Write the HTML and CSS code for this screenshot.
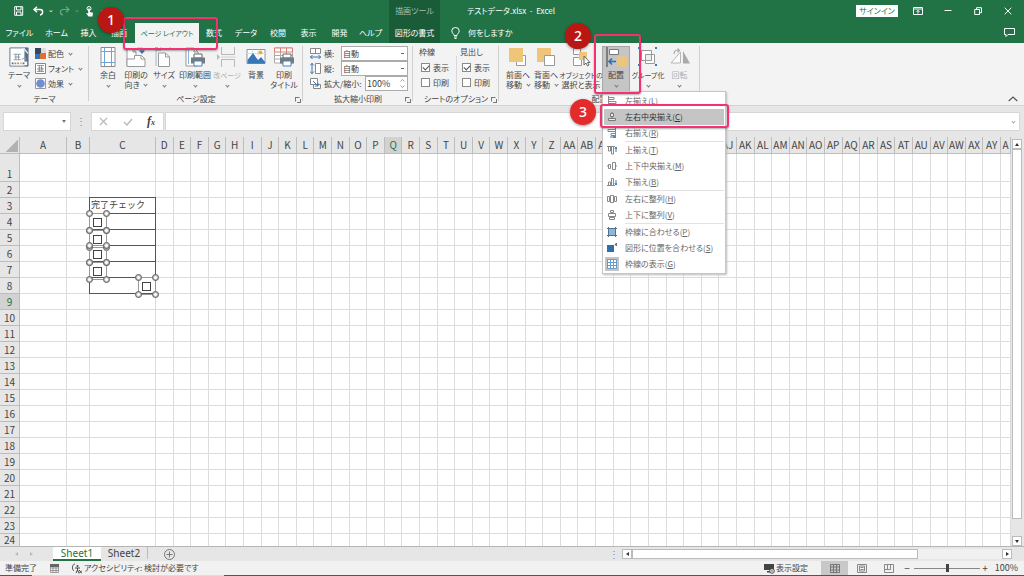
FILE: index.html
```html
<!DOCTYPE html>
<html lang="ja">
<head>
<meta charset="utf-8">
<title>テストデータ.xlsx - Excel</title>
<link rel="stylesheet" href="styles.css">
</head>
<body>
<div class="app">
<header class="top">
  <div class="quick">
    <button class="qbtn" aria-label="上書き保存"><svg width="10" height="10" viewBox="0 0 10 10"><path d="M.7.7h8v8.600h-8zM2.500.9v3h4.500v-3M2.500 9V6h4.500v3" fill="none" stroke="#fff"/></svg></button>
    <button class="qbtn" aria-label="元に戻す"><svg width="11" height="10" viewBox="0 0 11 10"><path d="M4 .8 1 3.500 4 6.200M1.200 3.500H7c3.500 0 3.500 5 0 5.500" fill="none" stroke="#fff" stroke-width="1.500"/></svg></button>
    <span class="qchev">⌄</span>
    <button class="qbtn dim" aria-label="やり直し"><svg width="11" height="10" viewBox="0 0 11 10"><path d="M7 .8l3 2.700-3 2.700M9.800 3.500H4c-3.500 0-3.500 5 0 5.500" fill="none" stroke="#fff" stroke-width="1.200"/></svg></button>
    <span class="qchev dim">⌄</span>
    <button class="qbtn" aria-label="タッチ/マウス モード"><svg width="10" height="11" viewBox="0 0 10 11"><circle cx="4" cy="2.500" r="2" fill="none" stroke="#fff"/><path d="M3.200 2.500h1.600V6l3.200.8-.5 3.700H3.500L1 7l2.200.5z" fill="#fff"/></svg></button>
    <span class="qchev">⌄</span>
  </div>
  <div class="context-title">描画ツール</div>
  <div class="caption">
    <span class="doc">テストデータ.xlsx&nbsp; -&nbsp; Excel</span>
    <button class="signin">サインイン</button>
    <button class="win" aria-label="リボンの表示オプション"><svg width="10" height="8" viewBox="0 0 10 8"><path d="M.5.500h9v7h-9zM.5 2h9M5 6.500v-3M3.500 4.800 5 3.300l1.500 1.500" fill="none" stroke="#fff"/></svg></button>
    <button class="win" aria-label="最小化"><svg width="8" height="8" viewBox="0 0 8 8"><path d="M.5 3.500h7" stroke="#fff"/></svg></button>
    <button class="win" aria-label="元に戻す (縮小)"><svg width="8" height="8" viewBox="0 0 8 8"><path d="M.7 2.500h4.800v5H.7zM2.500 2.300V.7h5v5H6" fill="none" stroke="#fff"/></svg></button>
    <button class="win" aria-label="閉じる"><svg width="8" height="8" viewBox="0 0 8 8"><path d="M.7.7l6.600 6.600M7.300.7.7 7.300" stroke="#fff"/></svg></button>
  </div>
  <nav class="tabs">
    <button>ファイル</button><button>ホーム</button><button>挿入</button><button>描画</button>
    <div class="anchor"><button class="active dense">ページ レイアウト</button><span class="frame frame-tab"></span><span class="badge badge-1">1</span></div>
    <button>数式</button><button>データ</button><button>校閲</button><button>表示</button><button>開発</button><button>ヘルプ</button>
  </nav>
  <button class="context-tab">図形の書式</button>
  <div class="tell">
    <svg width="9" height="12" viewBox="0 0 9 12"><path d="M3 8.500C3 7 .8 6 .8 3.900a3.700 3.400 0 0 1 7.400 0C8.200 6 6 7 6 8.500zM3 10h3M3.500 11.500h2" fill="none" stroke="#fff"/></svg>
    <span class="tell-text">何をしますか</span>
    <button class="win" aria-label="コメント"><svg width="11" height="9" viewBox="0 0 11 9"><path d="M.5.500h10v6H4l-2 2v-2H.5z" fill="none" stroke="#fff"/></svg></button>
  </div>
</header>

<section class="ribbon">
  <div class="group g-theme">
    <div class="items">
      <button class="big"><svg width="22" height="22" viewBox="0 0 22 22"><path d="M1 1h20v20H1z" fill="#fff" stroke="#5c6f86"/><path d="M17 1h4v20h-4z" fill="#5c6f86"/><path d="M14 1h3l4 5v2z" fill="#dbe3ec"/><path d="M5 8h8M6 11h6M5 14h8M7.500 8v6M10.500 8v6M14 14l4-3v4" fill="none" stroke="#8895a5"/><path d="M2 16h18v4H2z" fill="#fff"/><path d="M3 17h2v2H3z" fill="#3a73b5"/><path d="M6 17h2v2H6z" fill="#e07b37"/><path d="M9 17h2v2H9z" fill="#999"/><path d="M12 17h2v2h-2z" fill="#f0b52c"/><path d="M15 17h2v2h-2z" fill="#3a73b5"/></svg><span>テーマ</span><i class="chev"></i></button>
      <div class="stack">
        <button><svg width="11" height="11" viewBox="0 0 11 11"><path d="M0 0h6v6H0z" fill="#35475a"/><path d="M6 0h5v5H6z" fill="#ddd"/><path d="M0 6h5v5H0z" fill="#3a73b5"/><path d="M5 5h6v6H5z" fill="#e07032"/></svg>配色<i class="chev"></i></button>
        <button><svg width="11" height="11" viewBox="0 0 11 11"><path d="M.5.500h10v10H.5z" fill="#fff" stroke="#888"/><path d="M2 2.500h7M3 5h5v2H3zM2 8.500h7M4.500 2.500v6M6.500 2.500v6" fill="none" stroke="#777" stroke-width=".7"/></svg>フォント<i class="chev"></i></button>
        <button><svg width="11" height="11" viewBox="0 0 11 11"><path d="M.5.500h10v10H.5z" fill="#fff" stroke="#999"/><circle cx="5.500" cy="5.500" r="4.300" fill="#6f8fcf"/></svg>効果<i class="chev"></i></button>
      </div>
    </div>
    <div class="name">テーマ</div>
  </div>

  <div class="group g-page">
    <div class="items">
      <button class="big w28"><svg width="16" height="20" viewBox="0 0 16 20"><path d="M1 .5h14v19H1z" fill="#fff" stroke="#8a8a8a"/><path d="M4.500 1v18M11.500 1v18M1.500 4.500h13M1.500 15.500h13" stroke="#6fa3d8"/></svg><span>余白</span><i class="chev"></i></button>
      <button class="big w28"><svg width="20" height="20" viewBox="0 0 20 20"><path d="M1 19V2h6l3 3v5" fill="#fff" stroke="#999"/><path d="M7 2v3h3" fill="none" stroke="#999"/><path d="M8.500 8.500h7l3.500 3.500v7.500H1V12h7.500z" fill="#fff" stroke="#999"/><path d="M15 8.500V12h4" fill="none" stroke="#999"/><path d="M11 1.500h5V5M13.800 3.500 16 6l2.300-2.500" fill="none" stroke="#3876b5" stroke-width="1.400"/></svg><span>印刷の<br>向き <i class="chev in"></i></span></button>
      <button class="big w28"><svg width="18" height="20" viewBox="0 0 18 20"><path d="M1 3v16M0 .5h3M6 1.500h9M6 0v3M15 0v3" fill="none" stroke="#9cb7d2"/><path d="M3.500 6V19.500h11V10l-4-4zM10.500 6v4h4M1 3h5" fill="#fff" stroke="#999"/></svg><span>サイズ</span><i class="chev"></i></button>
      <button class="big w34"><svg width="20" height="20" viewBox="0 0 20 20"><path d="M1 1h8l4 4v14H1z" fill="#fff" stroke="#999"/><path d="M3.500 3v14" stroke="#8db7df"/><path d="M9 1v4h4" fill="none" stroke="#999"/><path d="M9 7h8v4H9z" fill="#fff" stroke="#666"/><path d="M6 10.500h14v6H6z" fill="#737b84"/><path d="M9 14h8v5H9z" fill="#fff" stroke="#4b83bd"/></svg><span>印刷範囲</span><i class="chev"></i></button>
      <button class="big w30 off"><svg width="20" height="20" viewBox="0 0 20 20"><path d="M4.500 0v7.500h13V0M4.500 20v-7.500h13V20" fill="none" stroke="#aaa"/><path d="M0 7v6l3-3z" fill="#aaa"/><path d="M4 10h15" stroke="#ccc"/></svg><span class="dense">改ページ</span><i class="chev"></i></button>
      <button class="big w28"><svg width="20" height="20" viewBox="0 0 20 20"><path d="M1 2.500h18v14H1z" fill="#fff" stroke="#8296ab"/><path d="M1 6.500h18M6.500 2.500v8M12 2.500v8" stroke="#d5dde5"/><circle cx="14.500" cy="5.500" r="2" fill="#f0a941"/><path d="M1.500 13 7 6l5 7 3-3 4 5v1.500H1.500z" fill="#3876b5"/></svg><span>背景</span></button>
      <button class="big w28"><svg width="20" height="20" viewBox="0 0 20 20"><path d="M.5 1h18v15H.5zM.5 8.500h18M.5 12h18M6.500 1v15M12.500 1v15" fill="#fff" stroke="#aaa"/><path d="M.5 1h18v4H.5zM6.500 1v4M12.500 1v4" fill="#fff" stroke="#d98072"/><path d="M9 7h8v4H9z" fill="#fff" stroke="#666"/><path d="M6 10.500h14v6H6z" fill="#737b84"/><path d="M9 14h8v5H9z" fill="#fff" stroke="#4b83bd"/></svg><span>印刷<br>タイトル</span></button>
    </div>
    <div class="name">ページ設定</div><i class="launch"></i>
  </div>

  <div class="group g-scale">
    <div class="fields">
      <svg width="11" height="11" viewBox="0 0 11 11"><path d="M.5.500h10v5H.5zM5.500.500v5" fill="#fff" stroke="#888"/><path d="M0 9h11M2.500 7 .5 9l2 2M8.500 7l2 2-2 2" fill="none" stroke="#3876b5"/></svg><label for="fw">横:</label><select id="fw"><option>自動</option></select>
      <svg width="11" height="11" viewBox="0 0 11 11"><path d="M5.500.500h5v10h-5z" fill="#fff" stroke="#888"/><path d="M2 0v11M0 2.500l2-2 2 2M0 8.500l2 2 2-2" fill="none" stroke="#3876b5"/></svg><label for="fh">縦:</label><select id="fh"><option>自動</option></select>
      <svg width="11" height="11" viewBox="0 0 11 11"><path d="M.5.500h7v6h-7z" fill="#fff" stroke="#888"/><path d="M3.500 6.500h7v4h-7z" fill="#fff" stroke="#888"/><path d="M3 3l5 5M8 5v3H5" fill="none" stroke="#3876b5"/></svg><label class="zoom" for="fz"><span>拡大/縮小:</span><span class="spin"><input id="fz" type="text" value="100%"><svg width="5" height="9" viewBox="0 0 5 9"><path d="M.5 2.500l2-2 2 2M.5 6.500l2 2 2-2" fill="none" stroke="#888" stroke-width=".8"/></svg></span></label>
    </div>
    <div class="name">拡大縮小印刷</div><i class="launch"></i>
  </div>

  <div class="group g-opts">
    <div class="options">
      <fieldset><legend>枠線</legend><label><input type="checkbox" checked>表示</label><label><input type="checkbox">印刷</label></fieldset>
      <fieldset><legend>見出し</legend><label><input type="checkbox" checked>表示</label><label><input type="checkbox">印刷</label></fieldset>
    </div>
    <div class="name">シートのオプション</div><i class="launch"></i>
  </div>

  <div class="group g-arrange">
    <div class="items">
      <button class="big w28"><svg width="20" height="20" viewBox="0 0 20 20"><path d="M8.500 8.500h9v10h-9z" fill="#fff" stroke="#999"/><path d="M1 1h14v14H1z" fill="#efc57a"/></svg><span>前面へ<br>移動 <i class="chev in"></i></span></button>
      <button class="big w28"><svg width="20" height="20" viewBox="0 0 20 20"><path d="M1 1h14v14H1z" fill="#efc57a"/><path d="M8.500 8.500h10v10h-10z" fill="#fff" stroke="#999"/></svg><span>背面へ<br>移動 <i class="chev in"></i></span></button>
      <button class="big w42"><svg width="20" height="20" viewBox="0 0 20 20"><path d="M2.500 1.500h7v6h-7zM2.500 10.500h8v8h-8z" fill="#fff" stroke="#999"/><path d="M8 5h8v8H8z" fill="#efc57a"/><path d="M13 9v9l2-2 1.500 3 1.500-1-1.500-2.500H19z" fill="#fff" stroke="#666"/></svg><span><span class="dense">オブジェクトの</span><br>選択と表示</span></button>
      <div class="anchor arrange">
        <button class="big w28 pressed"><svg width="22" height="20" viewBox="0 0 22 20"><path d="M2 0v20" stroke="#666" stroke-width="1.500"/><path d="M4.500 2.500h9v5h-9z" fill="#fff" stroke="#777"/><path d="M12 9.500h10v10H12z" fill="#efc57a"/><path d="M4 14.500h7M7 11.500l-3 3 3 3" fill="none" stroke="#2770b8" stroke-width="1.600"/></svg><span>配置</span><i class="chev"></i></button>
        <div class="menu" role="menu">
          <button><svg viewBox="0 0 10 10"><path d="M1.500 0v10M2 1.500h5v2H2M2 5.500h7v2H2" fill="none" stroke="#888"/><path d="M2 9h5M4 7.500 2 9l2 1" fill="none" stroke="#3876b5"/></svg><span>左揃え(<u>L</u>)</span></button>
          <button class="hot"><svg viewBox="0 0 10 10"><path d="M5 0v1M3.500 1.500h3v3h-3zM5 4.500v2M1.500 6.500h7v2h-7z" fill="#eee" stroke="#777"/></svg><span>左右中央揃え(<u>C</u>)</span></button>
          <button><svg viewBox="0 0 10 10"><path d="M8.500 0v10M8 1.500H1v2h7M8 5.500H4v2h4" fill="none" stroke="#888"/><path d="M3 9h5M6 7.500 8 9l-2 1" fill="none" stroke="#3876b5"/></svg><span>右揃え(<u>R</u>)</span></button>
          <hr>
          <button><svg viewBox="0 0 10 10"><path d="M0 1.500h8M1.500 2v4h2V2M4.500 2v7h2V2" fill="none" stroke="#888"/><path d="M9 7V2M8 4l1-2 1 2" fill="none" stroke="#3876b5"/></svg><span>上揃え(<u>T</u>)</span></button>
          <button><svg viewBox="0 0 10 10"><path d="M0 5h1M1.500 3.500h2v4h-2zM5.500 1.500h3v7h-3zM9 5h1" fill="#fff" stroke="#888"/></svg><span>上下中央揃え(<u>M</u>)</span></button>
          <button><svg viewBox="0 0 10 10"><path d="M0 8.500h8M1.500 8V5h2v3M4.500 8V1.500h2V8" fill="none" stroke="#888"/><path d="M9 3v5M8 6l1 2 1-2" fill="none" stroke="#3876b5"/></svg><span>下揃え(<u>B</u>)</span></button>
          <hr>
          <button><svg viewBox="0 0 10 10"><path d="M.5 2.500h2v5h-2zM3.500 1.500h3v7h-3zM7.500 2.500h2v5h-2z" fill="#fff" stroke="#888"/></svg><span>左右に整列(<u>H</u>)</span></button>
          <button><svg viewBox="0 0 10 10"><path d="M3.500.500h3v2h-3zM1.500 3.500h7v3h-7zM2.500 7.500h5v2h-5z" fill="#fff" stroke="#888"/></svg><span>上下に整列(<u>V</u>)</span></button>
          <hr>
          <button><svg viewBox="0 0 10 10"><path d="M2 2h6v6H2z" fill="#8db7df"/><path d="M1.500 0v10M8.500 0v10M0 1.500h10M0 8.500h10" stroke="#54708c"/></svg><span>枠線に合わせる(<u>P</u>)</span></button>
          <button><svg viewBox="0 0 10 10"><path d="M0 2h7v7H0z" fill="#2f6fab"/><path d="M9.500 0v3L8 1.500z" fill="#444" stroke="#444" stroke-width=".5"/></svg><span>図形に位置を合わせる(<u>S</u>)</span></button>
          <button class="checked"><svg viewBox="0 0 10 10"><path d="M0 0h10v10H0z" fill="#fff"/><path d="M.5 0v10M3.500 0v10M6.500 0v10M9.500 0v10M0 .5h10M0 3.500h10M0 6.500h10M0 9.500h10" stroke="#6b9bc9"/></svg><span>枠線の表示(<u>G</u>)</span></button>
          <span class="frame frame-menu"></span><span class="badge badge-3">3</span>
        </div>
        <span class="frame frame-arrange"></span><span class="badge badge-2">2</span>
      </div>
      <button class="big w36"><svg width="20" height="20" viewBox="0 0 20 20"><path d="M3.500 3.500h10v10h-10zM7.500 7.500h9v9h-9z" fill="#fff" stroke="#999"/><path d="M7.500 7.500h6v6h-6z" fill="#eee" stroke="#999"/><path d="M0 0h2v2H0zM17 0h2v2h-2zM0 17h2v2H0zM17 17h2v2h-2z" fill="#3876b5"/></svg><span class="dense">グループ化</span><i class="chev"></i></button>
      <button class="big w27 off"><svg width="20" height="20" viewBox="0 0 20 20"><path d="M10.500 5v11H1z" fill="#fff" stroke="#aaa"/><path d="M13 4v12.500h7z" fill="#999"/><path d="M4 7c0-4 3-4 5-3.500M7.500 1.500l2 2-2 2" fill="none" stroke="#999" stroke-width="1.200"/></svg><span>回転</span><i class="chev"></i></button>
    </div>
    <div class="name">配置</div>
  </div>
  <button class="collapse" aria-label="リボンを折りたたむ"><svg width="10" height="6" viewBox="0 0 10 6"><path d="M.7 5 5 1l4.300 4" fill="none" stroke="#555" stroke-width="1.200"/></svg></button>
</section>

<section class="formula">
  <div class="namebox"><input type="text" aria-label="名前ボックス"><i class="tri"></i></div>
  <span class="dots">⋮</span>
  <div class="fx"><svg width="9" height="9" viewBox="0 0 9 9"><path d="M1 1l7 7M8 1 1 8" stroke="#bbb" stroke-width="1.300"/></svg><svg width="10" height="9" viewBox="0 0 10 9"><path d="M1 5l3 3 5-6" fill="none" stroke="#bbb" stroke-width="1.500"/></svg><span>f<small>x</small></span></div>
  <div class="entry"><input type="text" aria-label="数式バー"><i class="chev"></i></div>
</section>

<main class="work">
  <div class="sheet">
    <table class="grid" id="grid"></table>
    <div class="shape s1"><input type="checkbox" aria-label="チェック 4"><b></b><b></b><b></b><b></b></div>
    <div class="shape s2"><input type="checkbox" aria-label="チェック 5"><b></b><b></b><b></b><b></b></div>
    <div class="shape s3"><input type="checkbox" aria-label="チェック 6"><b></b><b></b><b></b><b></b></div>
    <div class="shape s4"><input type="checkbox" aria-label="チェック 7"><b></b><b></b><b></b><b></b></div>
    <div class="shape s5"><input type="checkbox" aria-label="チェック 8"><b></b><b></b><b></b><b></b></div>
  </div>
  <div class="vscroll"><button class="arrow up" aria-label="上へ"></button><div class="vthumb"></div><button class="arrow down" aria-label="下へ"></button></div>
</main>

<footer class="sheets">
  <div class="tabnav"><i class="arr l"></i><i class="arr r"></i></div>
  <button class="sheettab on">Sheet1</button><button class="sheettab">Sheet2</button>
  <button class="add" aria-label="新しいシート"><svg width="11" height="11" viewBox="0 0 11 11"><circle cx="5.500" cy="5.500" r="5" fill="none" stroke="#777"/><path d="M5.500 2.500v6M2.500 5.500h6" stroke="#777"/></svg></button>
  <span class="dots">⋮</span>
  <div class="hscroll"><button class="arrow left" aria-label="左へ"></button><div class="hthumb"></div><button class="arrow right" aria-label="右へ"></button></div>
</footer>
<div class="status">
  <span class="ready">準備完了</span>
  <svg class="macro" width="9" height="9" viewBox="0 0 9 9"><path d="M.5 1.500h8v7h-8zM.5 4h8M.5 6.500h8M3 3v5M6 3v5" fill="none" stroke="#888" stroke-width=".8"/><path d="M0 0h9v3H0z" fill="#666"/></svg>
  <svg width="11" height="11" viewBox="0 0 11 11"><path d="M4 .8C1 1.500.5 6 3 8" fill="none" stroke="#555"/><circle cx="6.500" cy="3" r="1" fill="#444"/><path d="M4 5h5M6.500 5v2L5 10M6.500 7l1.500 3M8 7l3 3.500M11 7.500l-3 3" fill="none" stroke="#444"/></svg>
  <span class="acc">アクセシビリティ: 検討が必要です</span>
  <button class="display"><svg width="11" height="11" viewBox="0 0 11 11"><path d="M0 1h10v6H0zM3 8h3v1.500H3z" fill="#444"/><circle cx="8" cy="8" r="2.300" fill="#fff" stroke="#444"/><circle cx="8" cy="8" r=".8" fill="#444"/></svg>表示設定</button>
  <button class="view on" aria-label="標準"><svg width="10" height="9" viewBox="0 0 10 9"><path d="M.5.500h9v8h-9zM.5 3h9M.5 6h9M3.500.500v8M6.500.500v8" fill="none" stroke="#777"/></svg></button>
  <button class="view" aria-label="ページ レイアウト"><svg width="10" height="9" viewBox="0 0 10 9"><path d="M.5.500h9v8h-9zM2.500 2h5v5h-5zM3.500 3.500h3M3.500 5.500h3" fill="none" stroke="#888"/></svg></button>
  <button class="view" aria-label="改ページ プレビュー"><svg width="10" height="9" viewBox="0 0 10 9"><path d="M.5.500h9v8h-9zM3.500.500v5M6.500.500v5M.5 5.500h6" fill="none" stroke="#888"/></svg></button>
  <span class="sign">−</span><input class="slider" type="range" min="0" max="100" value="50" aria-label="ズーム"><span class="sign">+</span>
  <span class="pct">100%</span>
</div>
<div class="edge"><i></i></div>
</div>
<script src="grid.js"></script>
</body>
</html>
```

FILE: styles.css
```css
* { box-sizing: border-box; }
body { margin: 0; overflow: hidden; font: 8px/10px "Noto Sans CJK JP", "Noto Sans", sans-serif; font-feature-settings: "palt"; color: #444; }
button, input, select { font: inherit; color: inherit; font-feature-settings: inherit; margin: 0; padding: 0; border: 0; background: none; border-radius: 0; outline: 0; }
button { white-space: nowrap; display: flex; align-items: center; justify-content: center; }
svg { display: block; flex: none; }
.app { height: 100vh; display: flex; flex-direction: column; background: #e6e6e6; }
.anchor { position: relative; display: flex; }
.dense { font-size: 7px; }

/* title bar and tabs */
.top { display: grid; grid-template: 22px 21px / 389px 51px minmax(0, 1fr); background: #217346; color: #fff; flex: none; }
.quick { display: flex; align-items: center; padding-left: 13px; gap: 4px; }
.qbtn { width: 12px; }
.quick .qbtn:first-child { margin-right: 3px; }
.qchev { width: 6px; height: 14px; font-size: 7px; }
.dim { opacity: .35; }
.context-title, .context-tab { background: #1b5c38; display: flex; align-items: center; justify-content: center; }
.context-title { color: #a4bfae; }
.caption, .tell { display: flex; align-items: center; min-width: 0; }
.doc { margin-left: 27px; margin-right: auto; white-space: pre; }
.signin { width: 42px; height: 12px; background: #fff; color: #217346; margin-right: 5px; }
.win { width: 30px; height: 20px; }
.caption .win:last-child { margin-right: 1px; }
.tabs { display: grid; grid-template-columns: 39px 35px 29px 32px 64px 30px 34px 30px 31px 31px 31px; }
.tabs .active { background: #f3f3f3; color: #217346; width: 100%; margin-top: 1px; }
.tell { padding-left: 11px; }
.tell-text { margin-left: 8px; margin-right: auto; }

/* ribbon */
.ribbon { display: flex; background: #f3f3f3; height: 63px; border-bottom: 1px solid #d2d2d2; flex: none; }
.group { position: relative; display: flex; flex-direction: column; padding-top: 3px; }
.group::after { content: ""; position: absolute; right: 0; top: 3px; bottom: 4px; width: 1px; background: #d0d0d0; }
.g-theme { width: 89px; }
.g-page { width: 214px; }
.g-scale { width: 110px; }
.g-opts { width: 86px; }
.g-arrange { width: 201px; }
.items { display: flex; height: 46px; }
.g-theme .items { padding-left: 5px; }
.g-page .items { padding-left: 5px; }
.g-arrange .items { padding-left: 5px; }
.name { text-align: center; margin-top: 2px; }
.launch { position: absolute; right: 3px; bottom: 3px; width: 5px; height: 5px; border: 1px solid #777; border-right-color: transparent; border-bottom-color: transparent; }
.launch::after { content: ""; position: absolute; left: 1px; top: 1px; width: 3px; height: 3px; border-right: 1px solid #777; border-bottom: 1px solid #777; }
.big { flex-direction: column; justify-content: flex-start; padding-top: 1px; width: 28px; height: 46px; flex: none; }
.big svg { margin-bottom: 3px; height: 20px; }
.big .chev { margin-top: 4px; }
.big .chev.in { margin: 0 0 2px 3px; }
.w27 { width: 27px; }
.w28 { width: 28px; }
.w30 { width: 30px; }
.w34 { width: 34px; }
.w36 { width: 36px; }
.w42 { width: 42px; }
.off { color: #b0b0b0; }
.off svg { opacity: .8; }
.chev { display: inline-block; width: 3px; height: 3px; border: solid #777; border-width: 0 1px 1px 0; transform: rotate(45deg); flex: none; }
.pressed { background: #c5c5c5; border: 1px solid #a8a8a8; padding-top: 0; height: 47px; }
.stack { display: grid; grid-template-rows: repeat(3, 15px); padding-left: 2px; }
.stack button { gap: 2px; justify-content: flex-start; }
.stack .chev { margin-left: 3px; }
.fields { display: grid; grid-template-columns: 11px 14px 67px; grid-auto-rows: 15px; column-gap: 3px; align-items: center; padding-left: 7px; height: 46px; }
.fields select { appearance: none; height: 15px; width: 67px; border: 1px solid #ababab; background: #fff linear-gradient(#666, #666) right 3px center / 3px 1px no-repeat; padding-left: 1px; }
.zoom { grid-column: 2 / 4; display: flex; justify-content: space-between; align-items: center; white-space: nowrap; }
.spin { display: flex; align-items: center; width: 43px; height: 15px; border: 1px solid #ababab; background: #fff; padding: 0 2px 0 1px; }
.zoom input { flex: 1; min-width: 0; font-size: 9px; }
.options { display: flex; height: 46px; padding-left: 6px; }
fieldset { border: 0; margin: 0; padding: 0; width: 41px; display: flex; flex-direction: column; }
fieldset + fieldset { background: linear-gradient(#d8d8d8, #d8d8d8) left 3px / 1px 37px no-repeat; padding-left: 4px; margin-left: -4px; }
legend { padding: 0; height: 14px; line-height: 12px; }
fieldset label { display: flex; align-items: center; gap: 3px; height: 15px; padding-left: 2px; }
input[type=checkbox] { appearance: none; width: 9px; height: 9px; background: #fff; border: 1px solid #8a8a8a; flex: none; position: relative; }
input:checked::after { content: ""; position: absolute; left: 1px; top: 1px; width: 5px; height: 3px; border: solid #555; border-width: 0 0 1px 1px; transform: rotate(-45deg); }
.collapse { margin-left: auto; margin-top: auto; padding: 0 6px 3px 0; }

/* align menu */
.menu { position: absolute; left: 0; top: 45px; width: 124px; background: #fff; border: 1px solid #c6c6c6; padding: 1px; z-index: 5; box-shadow: 1px 1px 2px #bbb; color: #666; }
.menu button { width: 100%; height: 16px; justify-content: flex-start; padding-left: 3px; gap: 8px; }
.menu svg { width: 10px; height: 10px; }
.menu hr { margin: 0 0 0 21px; border: 0; height: 1px; background: #e2e2e2; }
.menu .hot { background: #c5c5c5; color: #333; }
.menu .checked svg { outline: 2px solid #c5c5c5; }
.frame { position: absolute; border: 2px solid #f5316f; border-radius: 3px; z-index: 7; pointer-events: none; box-shadow: 0 1px 2px #0005; }
.frame-tab { left: -12px; top: -5px; width: 95px; height: 33px; }
.frame-arrange { left: -8px; top: -12px; width: 47px; height: 60px; }
.frame-menu { left: -3px; top: 12px; width: 129px; height: 24px; }
.badge { position: absolute; width: 26px; height: 26px; border-radius: 50%; background: #ba1712; color: #fff; z-index: 8; font: 500 14px/25px "Noto Sans", sans-serif; text-align: center; box-shadow: 0 1px 3px #0006; }
.badge-1 { left: -37px; top: -15px; }
.badge-2 { left: -37px; top: -23px; }
.badge-3 { left: -33px; top: 7px; background: #e32b2c; }

/* formula bar */
.formula { display: flex; height: 31px; padding: 6px 4px 6px 3px; align-items: stretch; flex: none; }
.formula > div { background: #fff; border: 1px solid #d6d6d6; display: flex; align-items: center; }
.namebox { width: 68px; padding-right: 4px; }
.formula input { flex: 1; min-width: 0; font-size: 10px; }
.tri { border: solid transparent; border-width: 3px 2px 0; border-top-color: #777; }
.dots { width: 20px; text-align: center; line-height: 18px; font-size: 10px; color: #888; }
.fx { width: 73px; justify-content: space-between; padding: 0 8px 0 7px; margin-right: 1px; }
.fx span { font: italic bold 12px/14px "Liberation Serif", serif; }
.fx small { font-size: 8px; }
.entry { flex: 1; padding-right: 4px; }
.entry .chev { border-color: #aaa; }

/* worksheet */
.work { flex: 1; min-height: 0; display: flex; }
.sheet { flex: 1; min-width: 0; position: relative; overflow: hidden; }
.grid { display: block; font-size: 10px; line-height: 14px; font-feature-settings: normal; }
.grid tbody, .grid thead { display: block; }
.grid tr { display: grid; grid-template-columns: 20px 47px 23px 66px repeat(48, minmax(0, 1fr)) 10px; height: 16px; }
.grid thead tr { height: 17px; }
.grid tr.tall { height: 28px; }
.grid th { font-weight: 400; padding: 0; background: #e6e6e6; color: #444; border: solid #bdbdbd; border-width: 0 1px 1px 0; display: flex; align-items: flex-end; justify-content: center; overflow: hidden; }
.grid thead th { align-items: center; }
.grid tbody tr:last-child th { align-items: flex-start; line-height: 12px; }
.grid td { padding: 0 0 0 1px; background: #fff; border: solid #dcdcdc; border-width: 0 1px 1px 0; font-size: 9px; white-space: nowrap; }
.grid .corner { background: linear-gradient(135deg, transparent 50%, #b2b2b2 50%) 6px 3px / 12px 12px no-repeat #e6e6e6; }
.grid th.sel { background: #d2d2d2; color: #217346; }
.grid td.box { border-color: #555; box-shadow: -1px 0 #555; }
.grid td.first { box-shadow: -1px 0 #555, 0 -1px #555, -1px -1px #555; }
.shape { position: absolute; width: 18px; height: 18px; border: 1px solid #999; display: flex; align-items: center; padding-left: 3px; }
.shape input[type=checkbox] { border-color: #444; }
.shape b { position: absolute; width: 7px; height: 7px; border: 1px solid #555; border-radius: 50%; background: #fff; box-shadow: inset 0 0 0 1px #bbb; }
.shape b:nth-of-type(odd) { left: -4px; }
.shape b:nth-of-type(even) { right: -4px; }
.shape b:nth-of-type(-n+2) { top: -4px; }
.shape b:nth-of-type(n+3) { bottom: -4px; }
.s1 { left: 89px; top: 76px; }
.s2 { left: 89px; top: 93px; }
.s3 { left: 89px; top: 108px; }
.s4 { left: 89px; top: 125px; }
.s5 { left: 138px; top: 140px; }
.vscroll { width: 13px; padding: 2px 2px 0 1px; display: flex; flex-direction: column; }
.vthumb { flex: 1; margin-bottom: 17px; background: #fff; border: 1px solid #bbb; }
.arrow { width: 10px; height: 10px; background: #fff; border: 1px solid #bbb; flex: none; }
.arrow::after { content: ""; border: 2px solid transparent; }
.up::after { border-bottom: 3px solid #333; border-top: 0; }
.down::after { border-top: 3px solid #333; border-bottom: 0; }
.left::after { border-right: 3px solid #333; border-left: 0; }
.right::after { border-left: 3px solid #333; border-right: 0; }

/* sheet tabs and status bar */
.sheets { height: 15px; display: flex; align-items: center; border-top: 1px solid #b5b5b5; font: 10px/12px "Noto Sans", sans-serif; flex: none; }
.tabnav { width: 53px; display: flex; gap: 12px; padding-left: 15px; }
.arr { border: 2px solid transparent; }
.arr.l { border-right: 3px solid #bbb; border-left: 0; }
.arr.r { border-left: 3px solid #bbb; border-right: 0; }
.sheettab { width: 47px; height: 12px; align-self: flex-start; border-right: 1px solid #bbb; }
.sheettab.on { width: 48px; height: 14px; background: #fff; color: #217346; border-bottom: 2px solid #217346; border-right: 0; }
.add { margin-left: 16px; }
.sheets .dots { margin-left: auto; width: 17px; line-height: 12px; }
.hscroll { width: 390px; display: flex; background: #f0f0f0; margin-right: 12px; }
.hthumb { width: 286px; background: #fff; border: 1px solid #bbb; margin-right: auto; }
.status { height: 14px; display: flex; align-items: center; background: #f1f1f1; padding: 0 6px 0 5px; flex: none; white-space: nowrap; }
.ready { width: 45px; }
.macro { margin-right: 12px; }
.acc { margin-left: 2px; margin-right: auto; }
.display { margin-right: 13px; gap: 1px; }
.view { width: 27px; height: 14px; }
.view.on { background: #c8c8c8; }
.sign { width: 10px; text-align: center; font-size: 10px; }
.slider { appearance: none; width: 66px; height: 10px; margin-left: 2px; background: linear-gradient(#888, #888) center / 100% 1px no-repeat; }
.slider::-webkit-slider-thumb { appearance: none; width: 3px; height: 8px; background: #444; }
.pct { font-size: 9px; width: 28px; text-align: right; }
.edge { height: 1px; background: #555; flex: none; display: flex; }
.edge i { margin-left: 32px; width: 192px; background: #ddd; }
```

FILE: grid.js
```js
const letters = n => (n > 26 ? String.fromCharCode(64 + Math.floor((n - 1) / 26)) : "") + String.fromCharCode(65 + (n - 1) % 26);
const COLS = 52;
const ROWS = 24;

let head = '<thead><tr><th class="corner"></th>';
for (let c = 1; c <= COLS; c++) {
  const name = c === COLS ? "A" : letters(c);
  head += `<th scope="col"${name === "Q" ? ' class="sel"' : ""}>${name}</th>`;
}
let body = "</tr></thead><tbody>";
for (let r = 1; r <= ROWS; r++) {
  body += `<tr${r === 1 ? ' class="tall"' : ""}><th scope="row"${r === 9 ? ' class="sel"' : ""}>${r}</th>`;
  for (let c = 1; c <= COLS; c++) {
    const boxed = c === 3 && r >= 3 && r <= 8;
    body += `<td${boxed ? ` class="box${r === 3 ? " first" : ""}"` : ""}>${boxed && r === 3 ? "完了チェック" : ""}</td>`;
  }
  body += "</tr>";
}
document.getElementById("grid").innerHTML = head + body + "</tbody>";
```
